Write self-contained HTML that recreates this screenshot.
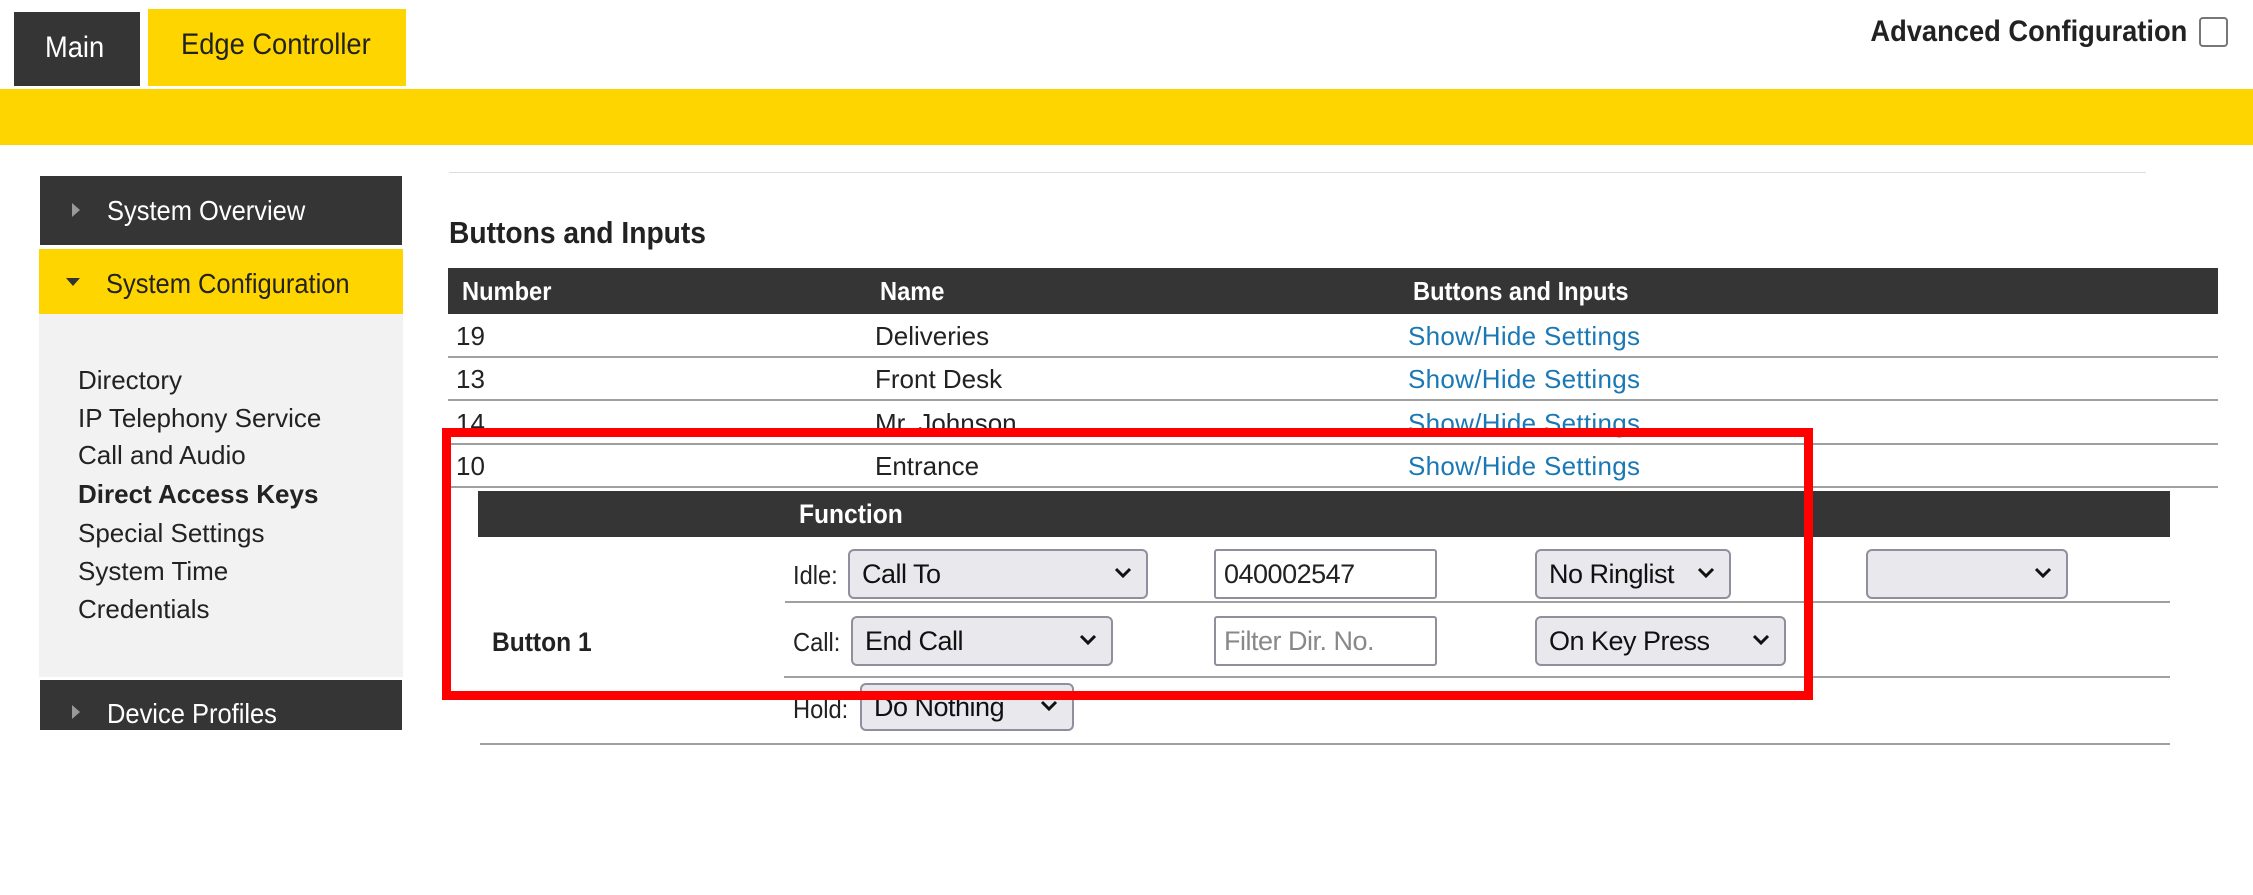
<!DOCTYPE html>
<html><head><meta charset="utf-8"><style>
body{margin:0;width:2253px;height:895px;background:#fff;position:relative;overflow:hidden;font-family:"Liberation Sans",sans-serif;color:#222}
.a{position:absolute;white-space:nowrap}
.c{transform:scaleX(.91);transform-origin:left center}
.dk{background:#353535;color:#fff}
.yl{background:#ffd500}
.t{line-height:1}
.lk{color:#1a78b4;font-size:26px;letter-spacing:0.3px}
.tx{font-size:26px;letter-spacing:0}
.sel{position:absolute;background:#e9e9ed;border:2px solid #8f8f9d;border-radius:6px;box-sizing:border-box;font-size:27px;letter-spacing:-0.5px;color:#111;padding-left:12px;display:flex;align-items:center}
.sel svg{position:absolute;right:14px;top:50%;margin-top:-7px}
.inp{position:absolute;border:2px solid #8f8f9d;border-radius:3px;box-sizing:border-box;font-size:27px;letter-spacing:-0.5px;padding-left:8px;display:flex;align-items:center}
.hl{position:absolute;height:2px;background:#a0a0a0}
</style></head><body>
<div class="a dk" style="left:14px;top:12px;width:126px;height:74px"></div>
<div class="a t c" style="left:45px;top:33px;font-size:30px;color:#fff">Main</div>
<div class="a yl" style="left:148px;top:9px;width:258px;height:77px"></div>
<div class="a t c" style="left:181px;top:30px;font-size:30px">Edge Controller</div>
<div class="a t" style="right:66px;top:17px;font-size:30px;font-weight:bold;transform:scaleX(.91);transform-origin:right center">Advanced Configuration</div>
<div class="a" style="left:2199px;top:17px;width:29px;height:30px;border:2px solid #777;border-radius:4px;box-sizing:border-box;background:#fff"></div>
<div class="a yl" style="left:0;top:89px;width:2253px;height:56px"></div>

<div class="a dk" style="left:40px;top:176px;width:362px;height:69px"></div>
<div class="a" style="left:72px;top:203px;border-left:8px solid #999;border-top:7px solid transparent;border-bottom:7px solid transparent"></div>
<div class="a t c" style="left:107px;top:197px;font-size:28px;color:#fff">System Overview</div>
<div class="a yl" style="left:39px;top:249px;width:364px;height:65px"></div>
<div class="a" style="left:66px;top:278px;border-top:8px solid #333;border-left:7px solid transparent;border-right:7px solid transparent"></div>
<div class="a t c" style="left:106px;top:270px;font-size:28px">System Configuration</div>
<div class="a" style="left:39px;top:314px;width:364px;height:363px;background:#f2f2f2"></div>
<div class="a t tx" style="left:78px;top:367px">Directory</div>
<div class="a t tx" style="left:78px;top:405px">IP Telephony Service</div>
<div class="a t tx" style="left:78px;top:442px">Call and Audio</div>
<div class="a t tx" style="left:78px;top:481px;font-weight:bold">Direct Access Keys</div>
<div class="a t tx" style="left:78px;top:520px">Special Settings</div>
<div class="a t tx" style="left:78px;top:558px">System Time</div>
<div class="a t tx" style="left:78px;top:596px">Credentials</div>
<div class="a dk" style="left:40px;top:680px;width:362px;height:50px"></div>
<div class="a" style="left:72px;top:705px;border-left:8px solid #999;border-top:7px solid transparent;border-bottom:7px solid transparent"></div>
<div class="a t c" style="left:107px;top:700px;font-size:28px;color:#fff">Device Profiles</div>

<div class="a" style="left:449px;top:172px;width:1697px;height:1px;background:#ddd"></div>
<div class="a t c" style="left:449px;top:217px;font-size:31px;font-weight:bold">Buttons and Inputs</div>
<div class="a dk" style="left:448px;top:268px;width:1770px;height:46px"></div>
<div class="a t c" style="left:462px;top:278px;font-size:26px;font-weight:bold;color:#fff">Number</div>
<div class="a t c" style="left:880px;top:278px;font-size:26px;font-weight:bold;color:#fff">Name</div>
<div class="a t c" style="left:1413px;top:278px;font-size:26px;font-weight:bold;color:#fff">Buttons and Inputs</div>

<div class="a t tx" style="left:456px;top:323px">19</div><div class="a t tx" style="left:875px;top:323px">Deliveries</div><div class="a t lk" style="left:1408px;top:323px">Show/Hide Settings</div>
<div class="hl" style="left:448px;top:356px;width:1770px"></div>
<div class="a t tx" style="left:456px;top:366px">13</div><div class="a t tx" style="left:875px;top:366px">Front Desk</div><div class="a t lk" style="left:1408px;top:366px">Show/Hide Settings</div>
<div class="hl" style="left:448px;top:399px;width:1770px"></div>
<div class="a t tx" style="left:456px;top:410px">14</div><div class="a t tx" style="left:875px;top:410px">Mr. Johnson</div><div class="a t lk" style="left:1408px;top:410px">Show/Hide Settings</div>
<div class="hl" style="left:448px;top:443px;width:1770px"></div>
<div class="a t tx" style="left:456px;top:453px">10</div><div class="a t tx" style="left:875px;top:453px">Entrance</div><div class="a t lk" style="left:1408px;top:453px">Show/Hide Settings</div>
<div class="hl" style="left:448px;top:486px;width:1770px"></div>

<div class="a dk" style="left:478px;top:491px;width:1692px;height:46px"></div>
<div class="a t c" style="left:799px;top:501px;font-size:27px;font-weight:bold;color:#fff">Function</div>
<div class="a t c" style="left:492px;top:629px;font-size:27px;font-weight:bold">Button 1</div>

<div class="a t tx c" style="left:793px;top:562px">Idle:</div>
<div class="sel" style="left:848px;top:549px;width:300px;height:50px">Call To<svg width="18" height="12" viewBox="0 0 18 12"><path d="M2 2l7 7 7-7" fill="none" stroke="#111" stroke-width="3"/></svg></div>
<div class="inp" style="left:1214px;top:549px;width:223px;height:50px">040002547</div>
<div class="sel" style="left:1535px;top:549px;width:196px;height:50px">No Ringlist<svg width="18" height="12" viewBox="0 0 18 12"><path d="M2 2l7 7 7-7" fill="none" stroke="#111" stroke-width="3"/></svg></div>
<div class="sel" style="left:1866px;top:549px;width:202px;height:50px"><svg width="18" height="12" viewBox="0 0 18 12"><path d="M2 2l7 7 7-7" fill="none" stroke="#111" stroke-width="3"/></svg></div>
<div class="hl" style="left:785px;top:601px;width:1385px"></div>

<div class="a t tx c" style="left:793px;top:629px">Call:</div>
<div class="sel" style="left:851px;top:616px;width:262px;height:50px">End Call<svg width="18" height="12" viewBox="0 0 18 12"><path d="M2 2l7 7 7-7" fill="none" stroke="#111" stroke-width="3"/></svg></div>
<div class="inp" style="left:1214px;top:616px;width:223px;height:50px;color:#888">Filter Dir. No.</div>
<div class="sel" style="left:1535px;top:616px;width:251px;height:50px">On Key Press<svg width="18" height="12" viewBox="0 0 18 12"><path d="M2 2l7 7 7-7" fill="none" stroke="#111" stroke-width="3"/></svg></div>
<div class="hl" style="left:784px;top:676px;width:1386px"></div>

<div class="a t tx c" style="left:793px;top:696px">Hold:</div>
<div class="sel" style="left:860px;top:683px;width:214px;height:48px">Do Nothing<svg width="18" height="12" viewBox="0 0 18 12"><path d="M2 2l7 7 7-7" fill="none" stroke="#111" stroke-width="3"/></svg></div>
<div class="hl" style="left:480px;top:743px;width:1690px"></div>

<div class="a" style="left:442px;top:428px;width:1371px;height:272px;border:9px solid #f00;box-sizing:border-box"></div>
</body></html>
